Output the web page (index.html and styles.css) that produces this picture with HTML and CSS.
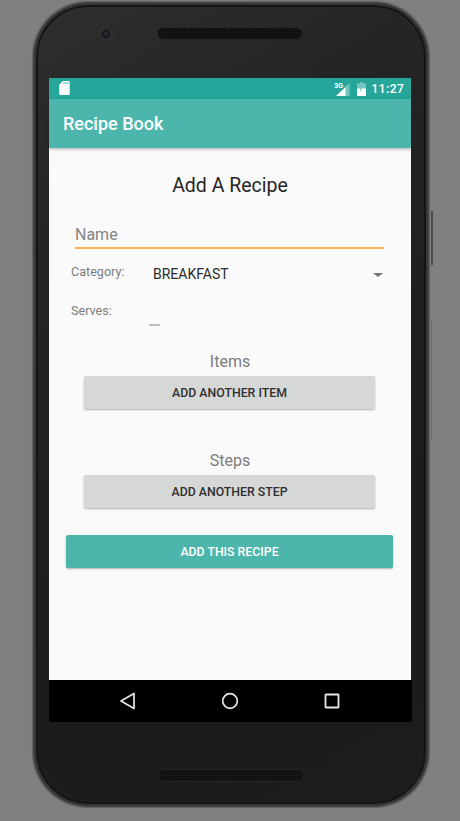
FILE: index.html
```html
<!DOCTYPE html>
<html lang="en">
<head>
<meta charset="utf-8">
<title>Recipe Book</title>
<link rel="stylesheet" href="styles.css">
</head>
<body>
<div class="phone">
  <span class="side-key side-key-power"></span>
  <span class="side-key side-key-volume"></span>
  <div class="bezel-top">
    <span class="camera"></span>
    <span class="speaker"></span>
  </div>
  <div class="screen">
    <div class="status-bar">
      <svg class="icon-sd" width="11" height="14" viewBox="0 0 11 14"><path d="M4 0H9.5A1.2 1.2 0 0 1 10.700 1.200V12.800A1.200 1.200 0 0 1 9.500 14H1.500A1.200 1.200 0 0 1 .3 12.800V3.700Z" fill="#fff"/><path d="M5 1v2M7 1v2M9 1v2" stroke="#26a69a" stroke-width=".8"/></svg>
      <span class="status-right">
        <svg class="icon-signal" width="16" height="14" viewBox="0 0 16 14"><path d="M15.500 1V14H2Z" fill="#fff" opacity=".35"/><path d="M11.500 5.200V14H2Z" fill="#fff"/></svg>
        <span class="net-label">3G</span>
        <svg class="icon-battery" width="9" height="14" viewBox="0 0 9 14"><path d="M3 0H6V1.200H9V14H0V1.200H3Z" fill="#fff" opacity=".35"/><path d="M0 6.500H3.500L3 10 6 5V6.500H9V14H0Z" fill="#fff"/></svg>
        <span class="clock">11:27</span>
      </span>
    </div>
    <header class="app-bar">Recipe Book</header>
    <main class="content">
      <h1 class="page-title">Add A Recipe</h1>
      <div class="name-field">Name</div>
      <div class="category-row">
        <span class="field-label">Category:</span>
        <span class="category-value">BREAKFAST</span>
        <span class="dropdown-arrow"></span>
      </div>
      <div class="serves-row">
        <span class="field-label">Serves:</span>
        <span class="serves-input"></span>
      </div>
      <section class="group group-items">
        <h2 class="group-title">Items</h2>
        <button class="btn btn-grey">ADD ANOTHER ITEM</button>
      </section>
      <section class="group group-steps">
        <h2 class="group-title">Steps</h2>
        <button class="btn btn-grey">ADD ANOTHER STEP</button>
      </section>
      <button class="btn btn-primary">ADD THIS RECIPE</button>
    </main>
    <nav class="nav-bar">
      <svg width="18" height="18" viewBox="0 0 18 18"><path d="M15 1.500V16.500L2 9Z" fill="none" stroke="#e8e8e8" stroke-width="1.700" stroke-linejoin="round"/></svg>
      <svg width="18" height="18" viewBox="0 0 18 18"><circle cx="9" cy="9" r="7.300" fill="none" stroke="#e8e8e8" stroke-width="1.700"/></svg>
      <svg width="18" height="18" viewBox="0 0 18 18"><rect x="2.500" y="2.500" width="13" height="13" fill="none" stroke="#e8e8e8" stroke-width="1.800" rx=".5"/></svg>
    </nav>
  </div>
  <div class="bezel-bottom">
    <span class="speaker"></span>
  </div>
</div>
</body>
</html>
```

FILE: styles.css
```css
* { box-sizing: border-box; }
html, body { margin: 0; height: 100%; }
body {
  background: #808080;
  overflow: hidden;
  font-family: Roboto, "Liberation Sans", sans-serif;
  padding: 5px 0 0 36px;
}
.phone {
  position: relative;
  width: 390px;
  height: 799px;
  border-radius: 52px;
  background: linear-gradient(150deg, #2e2e2e 0%, #242424 25%, #1c1c1c 70%, #1d1d1d 100%);
  border: 2px solid #141414;
  box-shadow: 0 0 0 2.500px #363636, 0 0 1px 3.500px #5c5c5c;
  padding: 0 0 0 11px;
}
.side-key { position: absolute; }
.side-key-power { left: 393px; top: 204px; width: 2px; height: 54px; background: #4a4a4a; }
.side-key-volume { left: 393px; top: 313px; width: 1px; height: 120px; background: #6c6c6c; }
.bezel-top {
  height: 71px;
  display: flex;
  align-items: flex-start;
  padding: 20px 0 0 50px;
}
.camera {
  width: 14px;
  height: 14px;
  border-radius: 50%;
  background: radial-gradient(circle, #2a2233 0 2px, #191919 3px 4px, #2f2f2f 5px 7px);
}
.speaker {
  display: block;
  width: 146px;
  height: 13px;
  border-radius: 7px;
  border: 1px solid #232323;
  background-color: #191919;
  background-image: radial-gradient(circle, #0c0c0c 0.8px, transparent 1px);
  background-size: 2.500px 2.500px;
}
.bezel-top .speaker { margin-left: 44px; }
.screen { width: 362px; height: 644px; display: flex; flex-direction: column; }
.status-bar {
  height: 21px;
  flex: none;
  background: #26a69a;
  display: flex;
  align-items: center;
  justify-content: space-between;
  padding: 0 7px 0 10px;
  color: #fff;
}
.icon-sd { display: block; margin-top: -1px; }
.status-right { position: relative; display: flex; align-items: center; }
.icon-signal { display: block; margin-top: 1px; }
.net-label {
  position: absolute;
  left: 0;
  top: 2px;
  font-size: 7px;
  font-weight: 700;
  line-height: 7px;
}
.icon-battery { display: block; margin: 1px 0 0 7px; }
.clock { font-size: 12.500px; font-weight: 500; margin-left: 5px; letter-spacing: .2px; line-height: 15px; }
.app-bar {
  height: 49px;
  flex: none;
  background: #4db6ac;
  color: #fff;
  font-size: 18px;
  font-weight: 500;
  line-height: 50px;
  padding-left: 14px;
  box-shadow: 0 1px 3px rgba(0,0,0,.3);
  position: relative;
}
.content {
  flex: 1;
  min-height: 0;
  background: #fafafa;
  display: flex;
  flex-direction: column;
  padding: 26px 0 0;
}
.page-title {
  margin: 0;
  text-align: center;
  font-size: 19.500px;
  font-weight: 400;
  line-height: 24px;
  color: #262626;
}
.name-field {
  margin: 25px 27px 0 26px;
  height: 26px;
  font-size: 16px;
  line-height: 24px;
  color: #858585;
  border-bottom: 2px solid #ffb74d;
}
.category-row {
  display: flex;
  align-items: center;
  height: 24px;
  margin-top: 13px;
  padding-left: 22px;
  position: relative;
}
.field-label {
  font-size: 12.600px;
  line-height: 14px;
  color: #7c7c7c;
}
.category-row .field-label { margin-top: -4px; width: 82px; }
.category-value { font-size: 14px; color: #2a2a2a; }
.dropdown-arrow {
  position: absolute;
  left: 324px;
  top: 11px;
  width: 0;
  height: 0;
  border-left: 5px solid transparent;
  border-right: 5px solid transparent;
  border-top: 4px solid #757575;
}
.serves-row { padding-left: 22px; margin-top: 18px; height: 32px; position: relative; }
.serves-row .field-label { display: block; }
.serves-input {
  position: absolute;
  left: 100px;
  top: 20px;
  width: 11px;
  height: 2px;
  background: #bdbdbd;
}
.group { display: flex; flex-direction: column; align-items: center; }
.group-items { margin-top: 16px; }
.group-steps { margin-top: 42px; }
.group-title {
  margin: 0;
  font-size: 16px;
  font-weight: 400;
  line-height: 19px;
  color: #7c7c7c;
}
.btn {
  display: block;
  border: 0;
  border-radius: 2px;
  font-family: inherit;
  font-size: 12.300px;
  font-weight: 500;
  height: 33px;
  padding: 0;
  box-shadow: 0 1px 2px rgba(0,0,0,.3);
}
.btn-grey {
  width: 291px;
  margin-top: 5px;
  margin-left: -1px;
  background: #d6d7d7;
  color: #303030;
}
.btn-primary {
  width: 327px;
  margin: 27px 0 0 17px;
  background: #4db6ac;
  color: #fff;
}
.nav-bar {
  width: 363px;
  height: 42px;
  flex: none;
  background: #000;
  display: flex;
  align-items: center;
  justify-content: space-between;
  padding: 0 71px 0 70px;
}
.bezel-bottom { padding: 47px 0 0 109px; }
```
